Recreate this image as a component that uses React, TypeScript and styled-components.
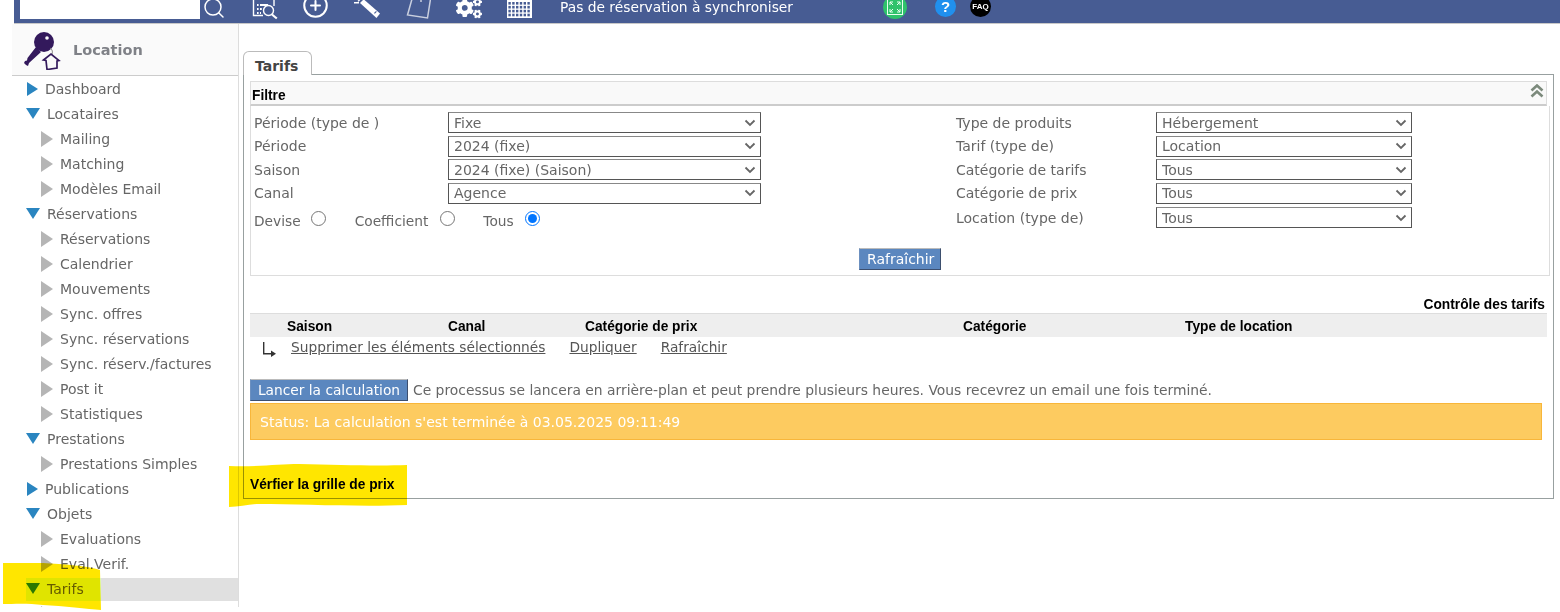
import React from "react"
import styled, { createGlobalStyle } from "styled-components"
import { FaCogs } from "react-icons/fa"
import { Search, CirclePlus } from "lucide-react"

const GlobalStyle = createGlobalStyle`
	html, body {
		margin: 0;
		padding: 0;
		background: #fff;
		overflow: hidden;
	}
	body {
		font-family: "DejaVu Sans", Verdana, sans-serif;
		font-size: 14px;
		color: #666;
	}
	#root {
		height: 612px;
		overflow: hidden;
	}
`

const Screen = styled.div`
	position: relative;
	width: 1560px;
	height: 612px;
	overflow: hidden;
`

const TopBar = styled.div`
	display: flex;
	align-items: flex-start;
	height: 23px;
	margin-left: 14px;
	padding-left: 6px;
	background: #475c93;
	border-bottom: 1px solid #c8c8c8;
	overflow: hidden;
`

const SearchInput = styled.div`
	flex: none;
	width: 180px;
	height: 19px;
	background: #fff;
`

const SearchButton = styled.span`
	display: flex;
	flex: none;
	width: 52px;
	margin-top: -4px;
	padding-left: 2px;
	box-sizing: border-box;
	color: #fff;
	svg {
		flex: none;
	}
`

const BarIcon = styled.span<{ $top?: number }>`
	display: flex;
	justify-content: center;
	flex: 0 0 25px;
	width: 25px;
	margin-right: 26px;
	margin-top: ${(p) => p.$top || 0}px;
	color: #fff;
	svg {
		flex: none;
	}
`

const BarMessage = styled.span`
	flex: 0 0 323px;
	margin-left: 2px;
	margin-top: -1px;
	color: #fff;
	font-size: 13.8px;
	white-space: nowrap;
`

const RoundIcon = styled.span<{ $bg: string; $size: number; $gap: number; $top: number }>`
	display: flex;
	align-items: center;
	justify-content: center;
	flex: 0 0 ${(p) => p.$size}px;
	height: ${(p) => p.$size}px;
	margin-top: ${(p) => p.$top}px;
	margin-right: ${(p) => p.$gap}px;
	border-radius: 50%;
	background: ${(p) => p.$bg};
	color: #fff;
`

const HelpMark = styled.span`
	margin-top: 1px;
	font-family: "Liberation Sans", Arial, sans-serif;
	font-size: 15px;
	font-weight: bold;
	line-height: 12px;
`

const FaqMark = styled.span`
	font-family: "Liberation Sans", Arial, sans-serif;
	font-size: 8px;
	font-weight: bold;
`

const Page = styled.div`
	display: flex;
	align-items: flex-start;
	margin-left: 12px;
`

const Sidebar = styled.nav`
	flex: 0 0 227px;
	box-sizing: border-box;
	height: 583px;
	border-right: 1px solid #ddd;
	overflow: hidden;
`

const SideHeader = styled.div`
	display: flex;
	align-items: center;
	height: 51px;
	padding-left: 11px;
	background: #fafafa;
	border-bottom: 1px solid #ccc;
	svg {
		margin-top: 3px;
	}
`

const SideTitle = styled.span`
	margin-left: 12px;
	color: #7f8187;
	font-size: 14.5px;
	font-weight: bold;
`

const SideItem = styled.div<{ $level: number }>`
	display: flex;
	align-items: center;
	height: 25px;
	padding-left: ${(p) => (p.$level === 1 ? 29 : 14)}px;
	white-space: nowrap;
`

const ActiveSideItem = styled.div`
	display: flex;
	align-items: center;
	box-sizing: border-box;
	height: 23px;
	margin: 2px 0 0 14px;
	padding-bottom: 2px;
	background: linear-gradient(90deg, #e0fde0 75px, #e0e0e0 75px);
	white-space: nowrap;
`

const ArrowRight = styled.i<{ $grey?: boolean }>`
	flex: none;
	width: 0;
	height: 0;
	margin-left: ${(p) => (p.$grey ? 0 : 1)}px;
	margin-right: 7px;
	border-style: solid;
	border-width: ${(p) => (p.$grey ? "8px 0 8px 12px" : "7px 0 7px 11px")};
	border-color: transparent transparent transparent ${(p) => (p.$grey ? "#b5b5b5" : "#2a85c0")};
`

const ArrowDown = styled.i`
	flex: none;
	width: 0;
	height: 0;
	margin-right: 7px;
	border-style: solid;
	border-width: 11px 7.5px 0 7.5px;
	border-color: #2a85c0 transparent transparent transparent;
`

const Main = styled.main`
	flex: none;
	width: 1311px;
	margin-left: 4px;
	padding-top: 27px;
`

const TabStrip = styled.div`
	display: flex;
	height: 23px;
`

const Tab = styled.div`
	box-sizing: border-box;
	position: relative;
	z-index: 1;
	width: 69px;
	height: 24px;
	padding: 6px 0 0 11px;
	background: #fff;
	border: 1px solid #bbb;
	border-bottom: none;
	border-radius: 6px 6px 0 0;
	color: #444;
	font-weight: bold;
`

const Panel = styled.section`
	box-sizing: border-box;
	height: 425px;
	padding: 6px;
	border: 1px solid #98a0a0;
`

const FilterHead = styled.div`
	display: flex;
	align-items: center;
	justify-content: space-between;
	box-sizing: border-box;
	width: 1297px;
	height: 25px;
	padding: 5px 2px 0 1px;
	background: #f9f9f9;
	border: 1px solid #ddd;
	border-bottom: 2px solid #ccc;
	color: #000;
	font-family: "Liberation Sans", Arial, sans-serif;
	font-size: 13.75px;
	font-weight: bold;
	svg {
		margin-top: -9px;
	}
`

const FilterBody = styled.div`
	box-sizing: border-box;
	width: 1300px;
	height: 170px;
	padding: 5px 3px 0;
	border: 1px solid #ddd;
	border-top: none;
`

const FilterColumns = styled.div`
	display: flex;
	height: 137px;
`

const FilterColumn = styled.div<{ $width: number }>`
	flex: 0 0 ${(p) => p.$width}px;
`

const FilterRow = styled.div<{ $label: number; $select: number }>`
	display: grid;
	grid-template-columns: ${(p) => p.$label}px ${(p) => p.$select}px;
	align-items: center;
	height: 23.5px;
	&:nth-child(5) {
		margin-top: 1px;
	}
`

const Dropdown = styled.select`
	box-sizing: border-box;
	appearance: none;
	width: 100%;
	height: 21px;
	padding: 0 5px;
	background: #fff url("data:image/svg+xml,%3Csvg xmlns='http://www.w3.org/2000/svg' width='12' height='8'%3E%3Cpath d='M1.500 1.500l4.500 4.500 4.500-4.500' fill='none' stroke='%23666' stroke-width='1.800'/%3E%3C/svg%3E") no-repeat right 4px center;
	border: 1px solid #555;
	border-top-color: #888;
	border-radius: 0;
	color: #666;
	font-family: "DejaVu Sans", Verdana, sans-serif;
	font-size: 14px;
`

const RadioRow = styled.div`
	display: flex;
	align-items: center;
	height: 28px;
	margin-top: 1px;
	font-size: 13.75px;
`

const RadioLabel = styled.label<{ $gap: number }>`
	display: flex;
	align-items: center;
	margin-right: ${(p) => p.$gap}px;
	padding-top: 2px;
`

const Radio = styled.input<{ $left: number }>`
	width: 15px;
	height: 15px;
	margin: -6px 0 0 ${(p) => p.$left}px;
`

const BlueButton = styled.button`
	display: block;
	box-sizing: border-box;
	padding: 0 7px;
	background: #5b87bf;
	border: 1px solid #3d4f6e;
	border-top-color: #bbb;
	border-left-color: #6c90c0;
	color: #fff;
	font-family: "DejaVu Sans", Verdana, sans-serif;
	font-size: 14px;
`

const RefreshButton = styled(BlueButton)`
	width: 82px;
	height: 22px;
	margin: 0 auto;
`

const ControlLink = styled.div`
	box-sizing: border-box;
	width: 1295px;
	height: 17px;
	margin-top: 20px;
	padding-top: 1px;
	color: #000;
	font-family: "Liberation Sans", Arial, sans-serif;
	font-size: 13.75px;
	font-weight: bold;
	text-align: right;
`

const TableHead = styled.div`
	display: grid;
	grid-template-columns: 161px 137px 378px 222px 1fr;
	align-items: center;
	box-sizing: border-box;
	width: 1297px;
	height: 24px;
	padding: 2px 0 0 37px;
	background: #eee;
	border-top: 1px solid #ddd;
	color: #000;
	font-family: "Liberation Sans", Arial, sans-serif;
	font-size: 13.75px;
	font-weight: bold;
`

const ActionRow = styled.div`
	display: flex;
	align-items: center;
	height: 19px;
	padding-left: 12px;
	font-size: 13.75px;
`

const ActionIcon = styled.span`
	display: flex;
	margin: 4px 13px 0 0;
`

const ActionLink = styled.a`
	margin-right: 24px;
	color: #555;
	text-decoration: underline;
`

const CalcRow = styled.div`
	display: flex;
	align-items: center;
	height: 23px;
	margin-top: 22px;
	font-size: 13.86px;
`

const CalcButton = styled(BlueButton)`
	width: 158px;
	height: 22px;
	margin-right: 5px;
	padding: 0;
	font-size: 13.75px;
`

const StatusBar = styled.div`
	display: flex;
	align-items: center;
	box-sizing: border-box;
	width: 1292px;
	height: 37px;
	margin-top: 2px;
	padding-left: 9px;
	background: #fdcb60;
	border: 1px solid #f8b63a;
	color: #fff;
`

const CheckLabel = styled.div`
	margin-top: 37px;
	color: #000;
	font-family: "Liberation Sans", Arial, sans-serif;
	font-size: 13.75px;
	font-weight: bold;
`

const Marker = styled.svg<{ $x: number; $y: number }>`
	position: absolute;
	left: ${(p) => p.$x}px;
	top: ${(p) => p.$y}px;
	mix-blend-mode: multiply;
	pointer-events: none;
`

const ReportIcon = () => (
	<svg width="26" height="20" viewBox="0 0 26 20" fill="none" stroke="#fff" strokeWidth="1.4">
		<path d="M1.5 0V15.5H11" />
		<path d="M22 0V6" />
		<path d="M5 5h1.6M8 5h8M5 9h1.6M8 9h1.8M5 13h1.6M8 13h1" strokeWidth="1.8" />
		<circle cx="16.5" cy="10.5" r="5" />
		<path d="M20 14.5l4.8 4" strokeWidth="2.2" />
	</svg>
)

const WandIcon = () => (
	<svg width="27" height="20" viewBox="0 0 27 20" fill="#fff">
		<path d="M7 3l3-3h1.500L27 13.500 23.500 18z" />
		<path d="M1 2h5v1.400H1zM6.500 -1l1 .8-2 2-1-.8z" />
		<path d="M21 13l2-2 .8.8-2 2z" fill="#475c93" />
	</svg>
)

const TagIcon = () => (
	<svg width="26" height="20" viewBox="0 0 26 20" fill="none" stroke="#c9cfdf" strokeWidth="1.5">
		<path d="M7 -1L2.500 15 22.500 18 25.500 -1" />
		<circle cx="16" cy="1" r="1" fill="#c9cfdf" stroke="none" />
	</svg>
)

const CalendarIcon = () => (
	<svg width="25" height="18" viewBox="0 0 25 18">
		<rect width="25" height="18" fill="#fff" />
		{[0, 1, 2, 3].map((r) =>
			[0, 1, 2, 3, 4, 5].map((c) => (
				<rect key={`${r}-${c}`} x={1.4 + c * 3.8} y={2 + r * 3.9} width="2.4" height="2.6" fill="#475c93" />
			))
		)}
	</svg>
)

const ExpandIcon = () => (
	<svg width="16" height="16" viewBox="0 0 16 16" fill="none" stroke="#eafff0" strokeWidth="1">
		<rect x="0.500" y="0.500" width="15" height="15" />
		<path d="M3 3l3 3M3 3h3M3 3v3M13 3l-3 3M13 3h-3M13 3v3M3 13l3-3M3 13h3M3 13v-3M13 13l-3-3M13 13h-3M13 13v-3" />
	</svg>
)

const KeyIcon = () => (
	<svg width="38" height="38" viewBox="0 0 38 38">
		<circle cx="21" cy="10" r="10" fill="#33195c" />
		<circle cx="24" cy="6" r="1.800" fill="#fafafa" />
		<path d="M13 15l5 5L6 31l-1 3-2-1-2-2 1-2 2-.5.5-2.500z" fill="#33195c" />
		<path d="M27 16c3 2 3 5 1 8" fill="none" stroke="#777" />
		<path d="M20.500 28l7.500-6 8 6.500-2 .5v7l-10 1.500-1-9z" fill="#fafafa" stroke="#33195c" strokeWidth="1.700" />
	</svg>
)

const CollapseIcon = () => (
	<svg width="14" height="14" viewBox="0 0 14 14" fill="none" stroke="#7c8a7c" strokeWidth="2.600">
		<path d="M1.500 6.500L7 1.500l5.500 5M1.500 12.500L7 7.500l5.500 5" />
	</svg>
)

const TurnArrow = () => (
	<svg width="16" height="16" viewBox="0 0 16 16" fill="#333">
		<path d="M1 1h1.400v11H9v1.400H1z" />
		<path d="M9 9.500l5 3.200-5 3.300z" />
	</svg>
)

type NavEntry = { label: string; level: number; open?: boolean; active?: boolean }

const navEntries: NavEntry[] = [
	{ label: "Dashboard", level: 0 },
	{ label: "Locataires", level: 0, open: true },
	{ label: "Mailing", level: 1 },
	{ label: "Matching", level: 1 },
	{ label: "Modèles Email", level: 1 },
	{ label: "Réservations", level: 0, open: true },
	{ label: "Réservations", level: 1 },
	{ label: "Calendrier", level: 1 },
	{ label: "Mouvements", level: 1 },
	{ label: "Sync. offres", level: 1 },
	{ label: "Sync. réservations", level: 1 },
	{ label: "Sync. réserv./factures", level: 1 },
	{ label: "Post it", level: 1 },
	{ label: "Statistiques", level: 1 },
	{ label: "Prestations", level: 0, open: true },
	{ label: "Prestations Simples", level: 1 },
	{ label: "Publications", level: 0 },
	{ label: "Objets", level: 0, open: true },
	{ label: "Evaluations", level: 1 },
	{ label: "Eval.Verif.", level: 1 },
	{ label: "Tarifs", level: 0, open: true, active: true },
	{ label: "", level: 1 },
]

const leftFilters = [
	{ label: "Période (type de )", value: "Fixe" },
	{ label: "Période", value: "2024 (fixe)" },
	{ label: "Saison", value: "2024 (fixe) (Saison)" },
	{ label: "Canal", value: "Agence" },
]

const rightFilters = [
	{ label: "Type de produits", value: "Hébergement" },
	{ label: "Tarif (type de)", value: "Location" },
	{ label: "Catégorie de tarifs", value: "Tous" },
	{ label: "Catégorie de prix", value: "Tous" },
	{ label: "Location (type de)", value: "Tous" },
]

const columns = ["Saison", "Canal", "Catégorie de prix", "Catégorie", "Type de location"]

export default function App() {
	return (
		<Screen>
			<GlobalStyle />
			<TopBar>
				<SearchInput />
				<SearchButton>
					<Search size={24} strokeWidth={1.5} />
				</SearchButton>
				<BarIcon><ReportIcon /></BarIcon>
				<BarIcon $top={-8}><CirclePlus size={27} strokeWidth={1.8} /></BarIcon>
				<BarIcon><WandIcon /></BarIcon>
				<BarIcon><TagIcon /></BarIcon>
				<BarIcon $top={-5}><FaCogs size={26} /></BarIcon>
				<BarIcon><CalendarIcon /></BarIcon>
				<BarMessage>Pas de réservation à synchroniser</BarMessage>
				<RoundIcon $bg="#2fc26b" $size={24} $gap={28} $top={-5}><ExpandIcon /></RoundIcon>
				<RoundIcon $bg="#2090ee" $size={21} $gap={14} $top={-4}><HelpMark>?</HelpMark></RoundIcon>
				<RoundIcon $bg="#000" $size={21} $gap={0} $top={-4}><FaqMark>FAQ</FaqMark></RoundIcon>
			</TopBar>
			<Page>
				<Sidebar>
					<SideHeader>
						<KeyIcon />
						<SideTitle>Location</SideTitle>
					</SideHeader>
					{navEntries.map((entry, i) =>
						entry.active ? (
							<ActiveSideItem key={i}>
								<ArrowDown />
								{entry.label}
							</ActiveSideItem>
						) : (
							<SideItem key={i} $level={entry.level}>
								{entry.open ? <ArrowDown /> : <ArrowRight $grey={entry.level === 1} />}
								{entry.label}
							</SideItem>
						)
					)}
				</Sidebar>
				<Main>
					<TabStrip>
						<Tab>Tarifs</Tab>
					</TabStrip>
					<Panel>
						<FilterHead>
							Filtre
							<CollapseIcon />
						</FilterHead>
						<FilterBody>
							<FilterColumns>
								<FilterColumn $width={702}>
									{leftFilters.map((f) => (
										<FilterRow key={f.label} $label={194} $select={313}>
											{f.label}
											<Dropdown defaultValue={f.value}>
												<option>{f.value}</option>
											</Dropdown>
										</FilterRow>
									))}
									<RadioRow>
										<RadioLabel $gap={29}>
											Devise
											<Radio type="radio" name="mode" $left={10} />
										</RadioLabel>
										<RadioLabel $gap={28}>
											Coefficient
											<Radio type="radio" name="mode" $left={12} />
										</RadioLabel>
										<RadioLabel $gap={0}>
											Tous
											<Radio type="radio" name="mode" $left={11} defaultChecked />
										</RadioLabel>
									</RadioRow>
								</FilterColumn>
								<FilterColumn $width={456}>
									{rightFilters.map((f) => (
										<FilterRow key={f.label} $label={200} $select={256}>
											{f.label}
											<Dropdown defaultValue={f.value}>
												<option>{f.value}</option>
											</Dropdown>
										</FilterRow>
									))}
								</FilterColumn>
							</FilterColumns>
							<RefreshButton>Rafraîchir</RefreshButton>
						</FilterBody>
						<ControlLink>Contrôle des tarifs</ControlLink>
						<TableHead>
							{columns.map((c) => (
								<span key={c}>{c}</span>
							))}
						</TableHead>
						<ActionRow>
							<ActionIcon><TurnArrow /></ActionIcon>
							<ActionLink>Supprimer les éléments sélectionnés</ActionLink>
							<ActionLink>Dupliquer</ActionLink>
							<ActionLink>Rafraîchir</ActionLink>
						</ActionRow>
						<CalcRow>
							<CalcButton>Lancer la calculation</CalcButton>
							Ce processus se lancera en arrière-plan et peut prendre plusieurs heures. Vous recevrez un email une fois terminé.
						</CalcRow>
						<StatusBar>Status: La calculation s'est terminée à 03.05.2025 09:11:49</StatusBar>
						<CheckLabel>Vérfier la grille de prix</CheckLabel>
					</Panel>
				</Main>
			</Page>
			<Marker $x={229} $y={462} width="179" height="46" viewBox="0 0 179 46">
				<path d="M0 4C30 5 50 2 70 2 110 3 150 4 178 3L178 43C130 45 70 42 30 42 20 42 10 45 0 45Z" fill="#ffe600" />
			</Marker>
			<Marker $x={3} $y={562} width="99" height="50" viewBox="0 0 99 50">
				<path d="M0 1L40 1C60 2 85 4 97 8L98 48C85 47 60 44 40 43 25 41 10 42 0 42Z" fill="#ffe600" />
			</Marker>
		</Screen>
	)
}
